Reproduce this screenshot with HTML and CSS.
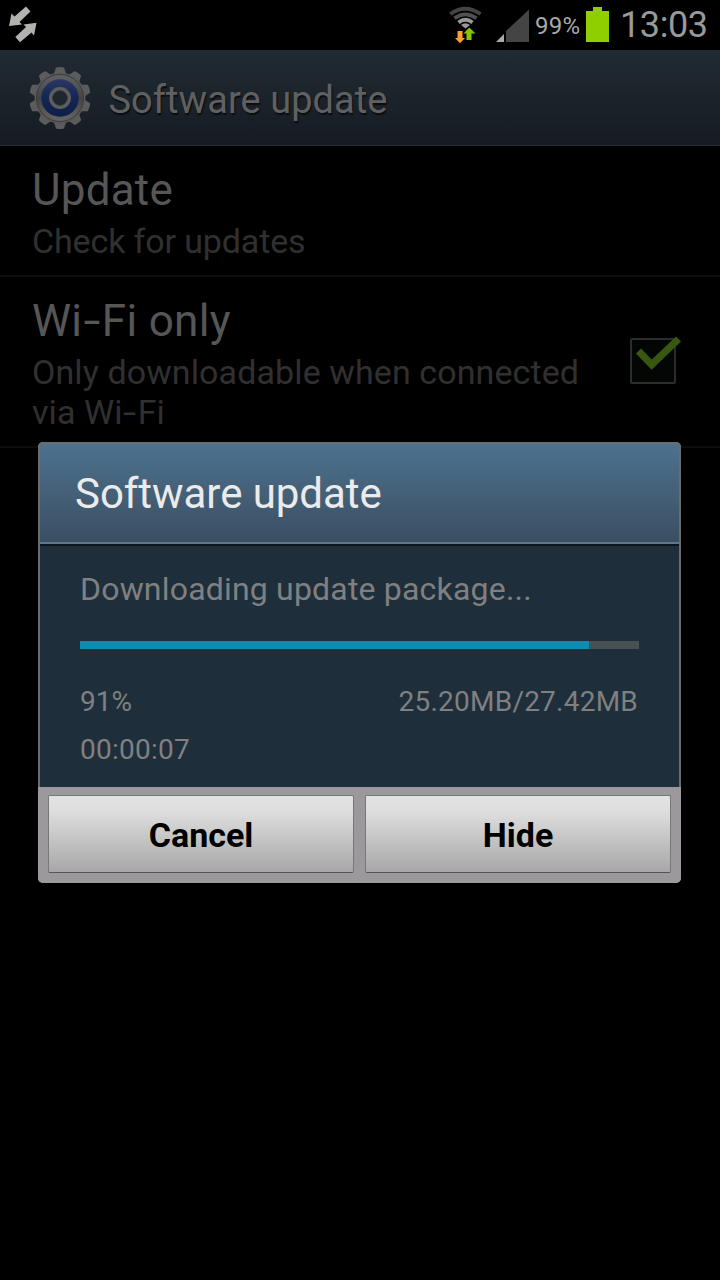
FILE: index.html
```html
<!DOCTYPE html>
<html lang="en">
<head>
<meta charset="utf-8">
<title>Software update</title>
<link rel="stylesheet" href="styles.css">
</head>
<body>
<div class="screen">
  <header class="status-bar">
    <svg class="sync-icon" width="40" height="50" viewBox="0 0 40 50">
      <path fill="#b0b3ae" d="M26 6.500L30.500 11.500L19.500 22L22 24.500L9 26L11.500 13.500L14.500 16.500Z"/>
      <path fill="#b0b3ae" d="M36.500 22.800L34 35.500L31.500 32.500L20 42.200L15.300 37L26 27L23.500 24.500Z"/>
    </svg>
    <div class="status-right">
      <svg class="wifi-icon" width="40" height="50" viewBox="0 0 40 50">
        <g fill="none" stroke-width="3.800">
          <path stroke="#444" d="M5.300 14Q20 3.500 35.500 14"/>
          <path stroke="#505050" d="M9.500 18.300Q20.300 10.500 31.500 18.300"/>
          <path stroke="#999" d="M13.500 22.500Q20.300 17 27.500 22.500"/>
        </g>
        <path fill="#999" d="M16 25Q20.300 21.500 25 25L20.500 28.500Z"/>
        <path fill="#ff9d2e" d="M12.500 31H17.500V38H20L15 43.300L10 38H12.500Z"/>
        <path fill="#87c500" d="M21.500 40V33.500H18.500L24.300 27.500L30.500 33.500H26.500V40Z"/>
      </svg>
      <svg class="signal-icon" width="34" height="50" viewBox="0 0 34 50">
        <path fill="#444" d="M10 42V31L33 9.500V42Z"/>
        <path fill="#aaa" d="M0 42L8 34V42Z"/>
      </svg>
      <span class="battery-level">99%</span>
      <svg class="battery-icon" width="23" height="50" viewBox="0 0 23 50">
        <path fill="#8fcf00" d="M7 7H16V11H23V42H0V11H7Z"/>
      </svg>
      <span class="clock">13:03</span>
    </div>
  </header>

  <div class="action-bar">
    <svg class="gear-icon" width="64" height="66" viewBox="-32 -33 64 66">
      <defs>
        <linearGradient id="metal" x1="0" y1="0" x2="0" y2="1">
          <stop offset="0" stop-color="#626262"/><stop offset=".5" stop-color="#444"/><stop offset="1" stop-color="#666"/>
        </linearGradient>
        <linearGradient id="blue" x1="0" y1="0" x2="0" y2="1">
          <stop offset="0" stop-color="#2b3764"/><stop offset=".5" stop-color="#132653"/><stop offset="1" stop-color="#0d1f46"/>
        </linearGradient>
        <path id="tooth" d="M-6.500 -23L-4 -30.500Q0 -31.500 4 -30.500L6.500 -23Z"/>
      </defs>
      <g fill="#5c5c5c">
        <use href="#tooth"/><use href="#tooth" transform="rotate(36)"/><use href="#tooth" transform="rotate(72)"/>
        <use href="#tooth" transform="rotate(108)"/><use href="#tooth" transform="rotate(144)"/><use href="#tooth" transform="rotate(180)"/>
        <use href="#tooth" transform="rotate(216)"/><use href="#tooth" transform="rotate(252)"/><use href="#tooth" transform="rotate(288)"/>
        <use href="#tooth" transform="rotate(324)"/>
      </g>
      <circle r="25.500" fill="#585858"/>
      <circle r="23.500" fill="url(#metal)" stroke="#393d40" stroke-width="1"/>
      <circle r="18.700" fill="url(#blue)"/>
      <circle r="9.300" fill="#1e272e" stroke="#5e5e5e" stroke-width="3.400"/>
      <circle r="7.400" fill="none" stroke="#383e42" stroke-width=".8"/>
    </svg>
    <h1 class="action-title">Software update</h1>
  </div>

  <main class="list">
    <section class="row row-update">
      <div class="row-text">
        <h2 class="row-title title-update">Update</h2>
        <p class="row-summary summary-check">Check for updates</p>
      </div>
    </section>
    <section class="row row-wifi">
      <div class="row-text">
        <h2 class="row-title title-wifi">Wi<span class="hyphen">-</span>Fi only</h2>
        <p class="row-summary summary-wifi">Only downloadable when connected<br>via Wi<span class="hyphen">-</span>Fi</p>
      </div>
      <svg class="checkbox" width="56" height="52" viewBox="0 0 56 52">
        <rect x="3" y="5" width="44" height="44" rx="1" fill="#040606" stroke="#2a2d30" stroke-width="2"/>
        <path fill="none" stroke="#38580f" stroke-width="7.200" d="M10.500 17L23.700 30.700L50.500 5"/>
      </svg>
    </section>
  </main>

  <div class="dialog" role="dialog">
    <div class="dialog-header"><h2 class="dialog-title">Software update</h2></div>
    <div class="dialog-body">
      <p class="message">Downloading update package...</p>
      <div class="progress"><div class="progress-fill" style="width:91.06%"></div></div>
      <div class="stats"><span class="percent">91%</span><span class="size">25.20MB/27.42MB</span></div>
      <p class="time">00:00:07</p>
    </div>
    <div class="dialog-actions">
      <button class="button cancel">Cancel</button>
      <button class="button hide">Hide</button>
    </div>
  </div>
</div>
</body>
</html>
```
FILE: styles.css
```css
* { box-sizing: border-box; }
body { margin: 0; background: #000; font-family: Roboto, sans-serif; }
h1, h2, p { margin: 0; font-weight: 400; white-space: nowrap; }
.screen { position: relative; width: 720px; height: 1280px; overflow: hidden; background: #000; }

.status-bar { display: flex; justify-content: space-between; height: 50px; color: #999; }
.status-right { display: flex; width: 275px; }
.signal-icon { margin-left: 11px; }
.battery-level { width: 51px; margin-left: 5px; font-size: 24px; line-height: 52px; letter-spacing: .2px; color: #a9a9a9; }
.clock { margin-left: 11px; font-size: 36px; line-height: 51px; letter-spacing: -.4px; }

.action-bar { display: flex; align-items: center; height: 96px; padding-left: 28px; background: linear-gradient(#212b33, #161b22); border-bottom: 1px solid #282d36; }
.action-title { margin: 5px 0 0 16.5px; font-size: 38px; line-height: 44px; letter-spacing: .05px; color: #606060; text-shadow: 1px 2px 1px #0b0e11; }

.row { display: flex; border-bottom: 2px solid #0d0d0d; padding-left: 32px; }
.row-update { height: 131px; padding-top: 17px; }
.row-wifi { height: 171px; padding-top: 17px; justify-content: space-between; }
.row-title { font-size: 44px; line-height: 54px; color: #565656; }
.title-update { letter-spacing: .2px; }
.title-wifi { letter-spacing: .3px; }
.row-summary { font-size: 34px; line-height: 40px; margin-top: 4px; color: #303030; }
.summary-check { letter-spacing: -.13px; }
.summary-wifi { letter-spacing: .1px; }
.hyphen { display: inline-block; margin: 0 .08em; transform: scaleX(1.4); }
.checkbox { margin: 40px 36px 0 0; }

.dialog { position: absolute; left: 38px; top: 442px; width: 643px; height: 441px; display: flex; flex-direction: column; border-radius: 5px; overflow: hidden; background: #9c999c; }
.dialog-header { height: 104px; padding: 25px 0 0 35px; border: 2px solid #6c6c6c; border-bottom: 0; border-radius: 5px 5px 0 0; background: linear-gradient(#0c161e, #0c161e) 0 100% / 100% 2px no-repeat, linear-gradient(#607783, #607783) 0 98px / 100% 2px no-repeat, linear-gradient(#4c7290, #445f76 50%, #394d62); }
.dialog-title { font-size: 42px; line-height: 50px; letter-spacing: -.05px; color: #ebebeb; }
.dialog-body { height: 241px; padding: 23px 40px 0; border: solid #6c6c6c; border-width: 0 2px; background: #1e2e3b; color: #808080; }
.message { font-size: 32px; line-height: 40px; letter-spacing: .19px; }
.progress { height: 8px; margin-top: 32px; background: #475053; }
.progress-fill { height: 8px; background: #0e8bae; }
.stats { display: flex; justify-content: space-between; margin-top: 35px; font-size: 28px; line-height: 36px; }
.size { letter-spacing: .23px; margin-right: 1px; }
.time { margin-top: 12px; font-size: 28px; line-height: 36px; letter-spacing: .25px; }
.dialog-actions { display: grid; grid-template-columns: 306px 306px; gap: 11px; height: 96px; padding: 8px 10px 10px; background: #9c999c; }
.button { height: 78px; padding: 1px 0 0; border: 1px solid #77767a; border-bottom-color: #555457; border-radius: 2px; background: linear-gradient(#e2e2e2, #dedede 20%, #a7a7a7); font: 700 34px/1 Roboto, sans-serif; color: #000; }
```
